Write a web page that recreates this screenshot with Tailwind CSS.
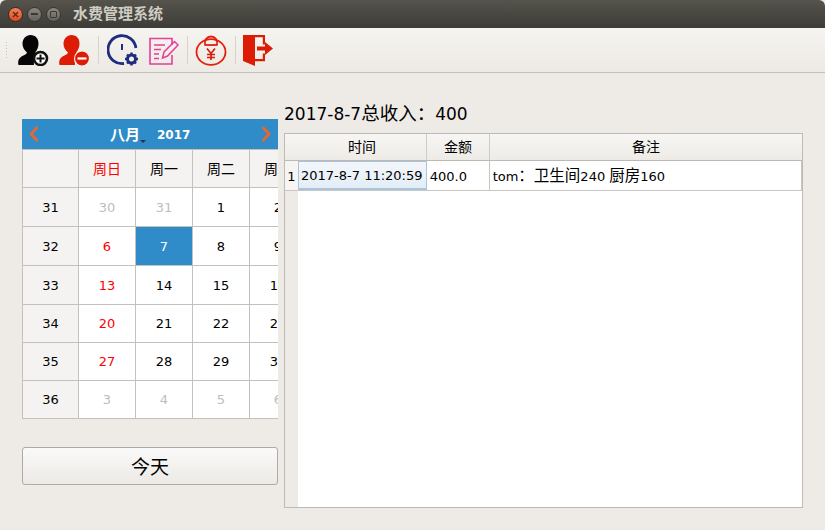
<!doctype html>
<html><head><meta charset="utf-8"><script src="https://cdn.jsdelivr.net/npm/@tailwindcss/browser@4"></script></head>
<body class="w-[825px] h-[530px] overflow-hidden bg-[#eeebe7] text-black font-['DejaVu_Sans','Noto_Sans_CJK_SC',sans-serif]">
<div class="h-[28px] flex items-center bg-gradient-to-b from-[#55534c] to-[#3d3c37] rounded-t-[6px]">
  <div class="flex items-center gap-[4px] pl-[8px]">
    <span class="w-[15px] h-[15px] rounded-full bg-gradient-to-b from-[#f4825a] to-[#dd4a1f] border border-[#3a2a22] flex items-center justify-center"><svg width="7" height="7" viewBox="0 0 7 7"><path d="M1 1l5 5M6 1l-5 5" stroke="#5a2412" stroke-width="1.2"/></svg></span>
    <span class="w-[15px] h-[15px] rounded-full bg-gradient-to-b from-[#8a887f] to-[#64625b] border border-[#36352f] flex items-center justify-center"><span class="w-[7px] h-[2px] bg-[#3a3935]"></span></span>
    <span class="w-[15px] h-[15px] rounded-full bg-gradient-to-b from-[#8a887f] to-[#64625b] border border-[#36352f] flex items-center justify-center"><span class="w-[7px] h-[7px] border border-[#3a3935] rounded-[1px]"></span></span>
  </div>
  <span class="ml-[12px] text-[15px] font-bold text-[#cfccc3]">水费管理系统</span>
</div>
<div class="h-[45px] flex items-center border-b border-[#c4c1bb] bg-gradient-to-b from-[#f6f4f0] to-[#edeae5]">
  <div class="ml-[5px] w-[4px] h-[18px] bg-[radial-gradient(#c5c2bc_1px,transparent_1px)] bg-[length:3px_3px]"></div>
  <svg class="ml-[8px]" width="32" height="32" viewBox="0 0 32 32"><path d="M13.500 1c5 0 8 3.500 8 8.500 0 4-1.500 6.500-3 8.500 0 1.500 1 2 3 3-3 1-5 4-4.500 10H1.500c-1-4 .5-7 3-8.500 2.500-1.500 5-2 5.500-4-2.500-2-4.500-5-4.500-8.500C5.500 4.500 9 1 13.500 1z" fill="#060606"/><circle cx="23.500" cy="24.500" r="6.500" fill="#fff" stroke="#111" stroke-width="2.600"/><path d="M23.500 20.500v8M19.500 24.500h8" stroke="#111" stroke-width="2"/></svg>
  <svg class="ml-[9px]" width="32" height="32" viewBox="0 0 32 32"><path d="M13.500 1c5 0 8 3.500 8 8.500 0 4-1.500 6.500-3 8.500 0 1.500 1 2 3 3-3 1-5 4-4.500 10H1.500c-1-4 .5-7 3-8.500 2.500-1.500 5-2 5.500-4-2.500-2-4.500-5-4.500-8.500C5.500 4.500 9 1 13.500 1z" fill="#dd1c05"/><circle cx="24" cy="24.500" r="7.500" fill="#dd1c05" stroke="#f3f1ec" stroke-width="1.200"/><path d="M19.500 24.500h9" stroke="#fff" stroke-width="2.200"/></svg>
  <div class="ml-[8px] w-[1px] h-[28px] bg-[#d6d3cd]"></div>
  <svg class="ml-[8px]" width="32" height="32" viewBox="0 0 32 32"><path d="M17 29.500A14 14 0 1 1 28.900 14" fill="none" stroke="#1f2d80" stroke-width="2.800"/><path d="M15 10v6" stroke="#1f2d80" stroke-width="2"/><circle cx="24.500" cy="25" r="4" fill="none" stroke="#1f2d80" stroke-width="3"/><path d="M24.500 18.500v3M24.500 28.500v3M18 25h3M28 25h3M20 20.500l2 2M27 27.500l2 2M29 20.500l-2 2M22 27.500l-2 2" stroke="#1f2d80" stroke-width="2.400"/></svg>
  <svg class="ml-[9px]" width="32" height="32" viewBox="0 0 32 32"><path d="M24 11V4.500H2V30h22v-9" fill="none" stroke="#e83e9a" stroke-width="1.600"/><path d="M6 11h11M6 15.500h7M6 20h5M6 24.500h5" stroke="#e83e9a" stroke-width="1.500"/><path d="M14.500 24l1.500-6L26.500 7.500l3.500 3.500L19.500 22z" fill="none" stroke="#e83e9a" stroke-width="1.500"/></svg>
  <div class="ml-[7px] w-[1px] h-[28px] bg-[#d6d3cd]"></div>
  <svg class="ml-[7px]" width="32" height="32" viewBox="0 0 32 32"><ellipse cx="16" cy="18" rx="14.500" ry="12.800" fill="none" stroke="#e2200c" stroke-width="1.800"/><path d="M10 11c-1-5 2-8.500 6-8.500s7 3.500 6 8.500" fill="none" stroke="#e2200c" stroke-width="1.800"/><path d="M9.500 11h13" stroke="#e2200c" stroke-width="1.800"/><path d="M12 14.500l4 5 4-5M16 19.500v6.500M12 20.500h8M12 23.500h8" fill="none" stroke="#d81e0a" stroke-width="1.700"/></svg>
  <div class="ml-[8px] w-[1px] h-[28px] bg-[#d6d3cd]"></div>
  <svg class="ml-[7px]" width="32" height="34" viewBox="0 0 32 34"><path d="M0 2h22v9.500h-2.200V4.200H12V26h7.800v-5.500H22V28.200H12V33L0 28z" fill="#dd1c05"/><path d="M14 13.500h8V9l8 6.500-8 6.500v-4.500h-8z" fill="#dd1c05"/></svg>
</div>
<div class="flex">
  <div class="w-[256px] ml-[22px] mt-[46px] shrink-0">
    <div class="overflow-hidden h-[300px] border-b border-[#c4c0bb]">
      <div class="h-[30px] bg-[#2f8cc8] flex items-center justify-between relative px-[6px] text-white font-bold">
        <svg width="12" height="18" viewBox="0 0 12 18"><path d="M9.500 2L3 9l6.500 7" fill="none" stroke="#e8662f" stroke-width="2.800"/></svg>
        <div class="absolute left-[88px] top-[5px] flex items-center">
          <span class="text-[15px]">八月</span><span class="mt-[13px] w-0 h-0 border-x-[3px] border-x-transparent border-t-[3px] border-t-[#26364a]"></span>
          <span class="ml-[11px] text-[12px]">2017</span>
        </div>
        <svg width="12" height="18" viewBox="0 0 12 18"><path d="M2.500 2L9 9l-6.500 7" fill="none" stroke="#e8662f" stroke-width="2.800"/></svg>
      </div>
      <div class="grid grid-cols-[56px_57px_57px_57px_57px] grid-rows-[38px_39px_39px_39px_38px_38px_38px] w-[284px] text-[13px] border-l border-t border-[#c4c0bb] [&>*]:flex [&>*]:items-center [&>*]:justify-center [&>*]:pt-[1px] [&>*]:border-r [&>*]:border-b [&>*]:border-[#c4c0bb] [&>*]:bg-white">
        <div class="!bg-[#f5f3f1]"></div><div class="!bg-[#f5f3f1] text-[#f00] text-[14px]">周日</div><div class="!bg-[#f5f3f1] text-[14px]">周一</div><div class="!bg-[#f5f3f1] text-[14px]">周二</div><div class="!bg-[#f5f3f1] text-[14px]">周三</div>
        <div class="!bg-[#f5f3f1]">31</div><div class="text-[#bdbdbd]">30</div><div class="text-[#bdbdbd]">31</div><div>1</div><div>2</div>
        <div class="!bg-[#f5f3f1]">32</div><div class="text-[#f00]">6</div><div class="!bg-[#2f8cc8] text-white">7</div><div>8</div><div>9</div>
        <div class="!bg-[#f5f3f1]">33</div><div class="text-[#f00]">13</div><div>14</div><div>15</div><div>16</div>
        <div class="!bg-[#f5f3f1]">34</div><div class="text-[#f00]">20</div><div>21</div><div>22</div><div>23</div>
        <div class="!bg-[#f5f3f1]">35</div><div class="text-[#f00]">27</div><div>28</div><div>29</div><div>30</div>
        <div class="!bg-[#f5f3f1]">36</div><div class="text-[#bdbdbd]">3</div><div class="text-[#bdbdbd]">4</div><div class="text-[#bdbdbd]">5</div><div class="text-[#bdbdbd]">6</div>
      </div>
    </div>
    <button class="mt-[28px] w-[256px] h-[38px] rounded-[3px] border border-[#aeaaa5] bg-gradient-to-b from-[#fbfafa] to-[#ece9e5] text-[19px] pt-[2px]">今天</button>
  </div>
  <div class="ml-[6px] w-[519px] shrink-0">
    <div class="mt-[27px] h-[33px] text-[17px] leading-[28px]">2017-8-7<span class="text-[18.500px]">总收入：</span>400</div>
    <div class="h-[375px] border border-[#bdb9b4] bg-white overflow-hidden">
      <div class="flex h-[27px] border-b border-[#bdb9b4] bg-gradient-to-b from-[#f7f6f4] to-[#eeebe7] text-[14px] [&>*]:flex [&>*]:items-center [&>*]:justify-center">
        <div class="w-[13px]"></div>
        <div class="w-[129px] border-r border-[#cfcbc6]">时间</div>
        <div class="w-[63px] border-r border-[#cfcbc6]">金额</div>
        <div class="w-[312px]">备注</div>
      </div>
      <div class="flex h-[347px]">
        <div class="w-[13px] bg-[#eeebe7] shrink-0"><div class="h-[30px] flex items-center justify-center border-b border-[#c9c5c0] text-[13px] bg-[#f6f5f3] pt-[2px]">1</div></div>
        <div class="flex h-[30px] border-b border-[#c9c5c0] text-[13px] w-[504px] border-r">
          <div class="w-[129px] flex items-center pl-[2px] pt-[1px] border border-[#a9c4dc] border-b-[2px] bg-gradient-to-b from-[#f3f7fb] to-[#e3edf6] whitespace-nowrap">2017-8-7 11:20:59</div>
          <div class="w-[63px] flex items-center pl-[3px] pt-[2px] border-r border-[#c9c5c0]">400.0</div>
          <div class="w-[312px] flex items-center pl-[3px] pt-[2px] whitespace-nowrap"><span>tom<span class="text-[15.500px]">：卫生间</span>240 <span class="text-[15.500px]">厨房</span>160</span></div>
        </div>
      </div>
    </div>
  </div>
</div>
</body></html>
